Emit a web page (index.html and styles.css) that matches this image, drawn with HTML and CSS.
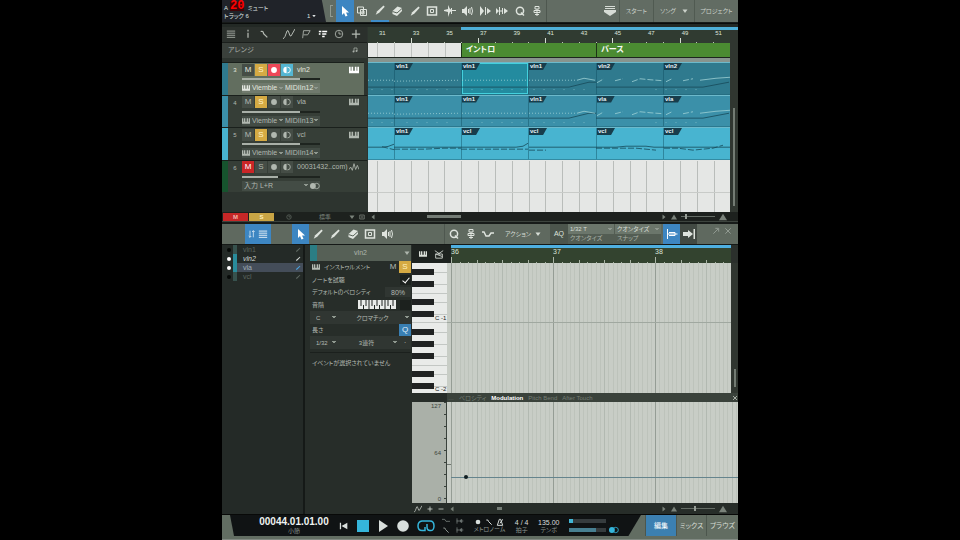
FILE: index.html
```html
<!DOCTYPE html>
<html lang="ja">
<head>
  <meta charset="UTF-8" />
  <title>アレンジ</title>
  <meta name="viewport" content="width=device-width, initial-scale=1.0" />
  <link rel="stylesheet" href="styles.css">
</head>
<body>
  <svg class="sprite" aria-hidden="true">
    <symbol id="arrow" viewBox="0 0 12 12"><path class="solid" d="M3 1v9l2-2 1.500 3.500 2-.8L7 7.500h3z"/></symbol>
    <symbol id="range" viewBox="0 0 12 12"><path d="M1.500 2h6v6h-6zM4.500 4.500h6v6h-6zM6 6h2v3H6z"/></symbol>
    <symbol id="pencil" viewBox="0 0 12 12"><path class="solid" d="M9.500 1.500l1.200 1.200-5.500 6-3.500 2 1.500-3.500z"/></symbol>
    <symbol id="eraser" viewBox="0 0 12 12"><path class="solid" d="M1.500 6l5-4.500 4.500 1.500v3l-5 5-4.500-2z"/><path class="cut" d="M1.500 6.500l4.500 1.500 5-4.500"/></symbol>
    <symbol id="box" viewBox="0 0 12 12"><path class="bold" d="M1.500 2h9v8h-9z"/><path d="M4.500 4.500h3v3h-3z"/></symbol>
    <symbol id="split" viewBox="0 0 12 12"><path class="solid" d="M4 0l2 4 2 1h4v1H8L6 7l-2 5V7L0 6V5l4-1z"/><path d="M7.500 3v6"/></symbol>
    <symbol id="bend" viewBox="0 0 12 12"><path class="solid" d="M0 3l3 3-3 3zM12 6L8 9V3z"/><path d="M3.500 2v8M5 5v2M6.500 3v6"/></symbol>
    <symbol id="stretch" viewBox="0 0 12 12"><path class="solid" d="M1 1l4 5-4 5zM12 6L8 9V3z"/><path d="M6.500 2v8"/></symbol>
    <symbol id="speaker" viewBox="0 0 12 12"><path class="solid" d="M1 4h2l3-3v10L3 8H1z"/><path d="M7.500 4v4M9 3v6M10.500 2q2 4 0 8"/></symbol>
    <symbol id="q" viewBox="0 0 12 12"><circle class="bold" cx="6" cy="5.800" r="3.600"/><path class="bold" d="M7 7.500l3 3"/></symbol>
    <symbol id="person" viewBox="0 0 12 12"><path d="M4 1.500h4v2.500H4zM6 4v7M3 5.500h6M3 5.500v2h6v-2M4 9.500h4"/></symbol>
    <symbol id="down" viewBox="0 0 12 12"><path class="solid" d="M1 1h10v1H1zM1 3h10v1H1zM0 5h12v2l-6 4-6-4z"/></symbol>
    <symbol id="menu" viewBox="0 0 12 12"><path d="M1 2.500h10M1 5h10M1 7.500h10M1 10h10"/></symbol>
    <symbol id="info" viewBox="0 0 12 12"><path class="bold" d="M6 1v2M6 4.500v6"/></symbol>
    <symbol id="wrench" viewBox="0 0 12 12"><path class="bold" d="M2 3q3-1 3.500 2.500L10 10"/></symbol>
    <symbol id="curve" viewBox="0 0 12 12"><path d="M0 11Q2 10 4 3q1-2 2 2t2 3l4-7"/></symbol>
    <symbol id="flag" viewBox="0 0 12 12"><path d="M2 11L3 2h8L8 7H3"/></symbol>
    <symbol id="blocks" viewBox="0 0 12 12"><path class="solid" d="M1 2h3v2H1zM5 2h6v2H5zM1 5h2v2H1zM5 5h5v2H5zM5 8h3v2H5z"/></symbol>
    <symbol id="clock" viewBox="0 0 12 12"><circle cx="6" cy="6" r="4.500"/><path d="M6 6v-3M6 6h3"/></symbol>
    <symbol id="plus" viewBox="0 0 12 12"><path class="bold" d="M6 1v10M1 6h10"/></symbol>
    <symbol id="minus" viewBox="0 0 12 12"><path class="bold" d="M1 6h10"/></symbol>
    <symbol id="note" viewBox="0 0 12 12"><path class="bold" d="M4 9V2h6v6"/><circle class="solid" cx="3" cy="9" r="2"/><circle class="solid" cx="9" cy="8" r="2"/></symbol>
    <symbol id="keys" viewBox="0 0 12 12"><path class="solid" d="M0 2h2v5h1V2h2v5h2V2h2v5h1V2h2v8H0z"/></symbol>
    <symbol id="wave" viewBox="0 0 12 12"><path d="M0 9l2-3 2 4 2-8 2 7 2-5 2 5"/></symbol>
    <symbol id="dot" viewBox="0 0 12 12"><circle class="solid" cx="6" cy="6" r="3.500"/></symbol>
    <symbol id="half" viewBox="0 0 12 12"><path class="solid" d="M5.500 2a4 4 0 0 0 0 8z"/><path d="M6.500 2.500a3.500 3.500 0 0 1 0 7"/></symbol>
    <symbol id="link" viewBox="0 0 12 12"><circle class="solid" cx="3.500" cy="6" r="3.500"/><circle cx="8" cy="6" r="3.200"/></symbol>
    <symbol id="updown" viewBox="0 0 12 12"><path d="M3 1v10M1 9l2 2 2-2M8 11V1M6 3l2-2 2 2"/></symbol>
    <symbol id="steps" viewBox="0 0 12 12"><path class="bold" d="M0 4h2l2 4h3l2-3h3"/></symbol>
    <symbol id="drum" viewBox="0 0 12 12"><path d="M2 6h8v5H2zM1 2l6 4M11 2L5 6M2 6l8 3"/></symbol>
    <symbol id="snap" viewBox="0 0 12 12"><path d="M1.500 1v10M1.500 6h10M3 4.500h6v3H3"/></symbol>
    <symbol id="next" viewBox="0 0 12 12"><path class="solid" d="M0 4h5V2l5 4-5 4V8H0zM10.500 1h1.500v10h-1.500z"/></symbol>
    <symbol id="pin" viewBox="0 0 12 12"><path class="bold" d="M2 10l7-7M5 2h5v5"/></symbol>
    <symbol id="close" viewBox="0 0 12 12"><path class="bold" d="M2 2l8 8M10 2l-8 8"/></symbol>
    <symbol id="start" viewBox="0 0 12 12"><path class="solid" d="M1 2h1.500v8H1zM10 2v8L3 6z"/></symbol>
    <symbol id="play" viewBox="0 0 12 12"><path class="solid" d="M2 0l9 6-9 6z"/></symbol>
    <symbol id="disc" viewBox="0 0 12 12"><circle class="solid" cx="6" cy="6" r="5.800"/></symbol>
    <symbol id="stop" viewBox="0 0 12 12"><path class="solid" d="M0 0h12v12H0z"/></symbol>
    <symbol id="loop" viewBox="0 0 18 12"><path class="bold" d="M7 10.500H5Q1 10.500 1 6t4-5h8q4 0 4 5t-4 4.500q-3 0-3-3.500V4M8 7v3.500H5"/></symbol>
    <symbol id="punch" viewBox="0 0 12 12"><path d="M1.500 2v8M1 6h10M8.500 3v6M7 4v4"/></symbol>
    <symbol id="pre" viewBox="0 0 12 12"><path d="M0 3.500h4l2 3h6"/></symbol>
    <symbol id="metro" viewBox="0 0 12 12"><path class="bold" d="M5 2h2l3 9H2zM6 8l4-6"/></symbol>
    <symbol id="left" viewBox="0 0 12 12"><path class="solid" d="M9 1v10L3 6z"/></symbol>
    <symbol id="right" viewBox="0 0 12 12"><path class="solid" d="M3 1v10l6-5z"/></symbol>
    <symbol id="hill" viewBox="0 0 12 12"><path class="solid" d="M6 1l6 10H0z"/></symbol>
    <symbol id="tri" viewBox="0 0 12 12"><path class="solid" d="M1 3h10l-5 7z"/></symbol>
  </svg>

  <main class="app">
    <header class="topbar">
      <div class="info">
        <div><span class="badge-a">A</span> ミュート</div>
        <div class="info-row"><span>トラック 6</span><span>1 <svg class="i4"><use href="#tri"/></svg></span></div>
        <span class="counter">20</span>
      </div>
      <div class="grip"></div>
      <nav class="tools" data-tools="arrow:on range pencil:line eraser pencil box split speaker stretch bend q person"></nav>
      <div class="pages">
        <svg class="i12"><use href="#down"/></svg>
        <button>スタート</button>
        <button>ソング <svg class="i6"><use href="#tri"/></svg></button>
        <button>プロジェクト</button>
      </div>
    </header>

    <section class="song">
      <div class="heads">
        <div class="head-tools">
          <svg class="i10"><use href="#menu"/></svg><svg class="i10"><use href="#info"/></svg><svg class="i10"><use href="#wrench"/></svg><i></i>
          <svg class="i12"><use href="#curve"/></svg><svg class="i10"><use href="#flag"/></svg><svg class="i10 lit"><use href="#blocks"/></svg><svg class="i10"><use href="#clock"/></svg><svg class="i10"><use href="#plus"/></svg>
        </div>
        <div class="arrange-head"><span>アレンジ</span><svg class="i6"><use href="#note"/></svg></div>
        <div class="rows" id="heads"></div>
      </div>
      <div class="timeline">
        <div class="ruler" id="ruler"></div>
        <div class="markers"><span class="blank"></span><span class="marker">イントロ</span><span class="marker">バース</span></div>
        <div class="rows lanes" id="lanes"></div>
        <div class="free"></div>
      </div>
      <div class="vscroll"><span></span></div>
    </section>
    <div class="song-foot">
      <div class="foot-left">
        <button class="mute-all">M</button><button class="solo-all">S</button>
        <svg class="i6"><use href="#clock"/></svg><span>標準</span><svg class="i6"><use href="#tri"/></svg><svg class="i6"><use href="#box"/></svg>
      </div>
      <div class="hscroll"><svg class="i6"><use href="#left"/></svg><span class="thumb song-thumb"></span><svg class="i6 push"><use href="#right"/></svg><svg class="i6"><use href="#hill"/></svg><span class="zoombar"></span><svg class="i8"><use href="#hill"/></svg></div>
    </div>

    <section class="editor">
      <header class="editbar">
        <div class="view-switch"><svg class="i8"><use href="#updown"/></svg><svg class="i10"><use href="#menu"/></svg></div>
        <nav class="tools" data-tools="arrow:on pencil pencil eraser box speaker"></nav>
        <nav class="tools second" data-tools="q person steps"></nav>
        <button class="action">アクション <svg class="i6"><use href="#tri"/></svg></button>
        <button class="aq">AQ</button>
        <div class="quant">
          <div><select id="quantize"><option>1/32 T</option></select><label for="quantize">クオンタイズ</label></div>
          <div><select id="snapping"><option>クオンタイズ</option></select><label for="snapping">スナップ</label></div>
        </div>
        <nav class="tools snapper" data-tools="snap:on next"></nav>
        <div class="window-btns"><svg class="i8"><use href="#pin"/></svg><svg class="i8"><use href="#close"/></svg></div>
      </header>

      <div class="edit-body">
        <ul class="tracklist">
          <li><b></b><i></i><span>vln1</span><svg class="i6"><use href="#pencil"/></svg></li>
          <li class="shown"><b></b><i></i><em>vln2</em><svg class="i6"><use href="#pencil"/></svg></li>
          <li class="shown current"><b></b><i></i><span>vla</span><svg class="i6"><use href="#pencil"/></svg></li>
          <li><b></b><i></i><span>vcl</span><svg class="i6"><use href="#pencil"/></svg></li>
        </ul>

        <aside class="inspector">
          <div class="part"><i></i><span>vln2</span><svg class="i6"><use href="#tri"/></svg></div>
          <div class="params">
            <div><svg class="i8"><use href="#keys"/></svg><span class="grow">インストゥルメント</span><button class="mini">M</button><button class="mini solo">S</button></div>
            <div><label class="grow" for="audition">ノートを試聴</label><input type="checkbox" id="audition" checked></div>
            <div><label class="grow" for="velocity">デフォルトのベロシティ</label><input class="field" id="velocity" value="80%"></div>
            <div><span class="grow">音階</span><svg class="scale-keys" viewBox="0 0 38 9"><path class="ivory" d="M0 0h38v9H0z"/><path class="ebony" d="M3 0v6M8 0v6M14 0v6M19 0v6M24 0v6M30 0v6M35 0v6M5.500 5v4M11 0v9M16.500 5v4M21.500 5v4M27 0v9M32.500 5v4"/></svg><input type="checkbox" aria-label="音階"></div>
            <div class="shade"><select class="root" aria-label="キー"><option>C</option></select><select class="grow mid" aria-label="スケール"><option>クロマチック</option></select></div>
            <div><span class="grow">長さ</span><button class="mini qbtn">Q</button></div>
            <div class="shade"><select class="root" aria-label="長さ"><option>1/32</option></select><select class="grow mid" aria-label="連符"><option>3連符</option></select><button class="mini">·</button></div>
          </div>
          <p class="empty">イベントが選択されていません</p>
        </aside>

        <div class="roll">
          <div class="roll-top">
            <div class="key-tools"><svg class="i8"><use href="#keys"/></svg><svg class="i10"><use href="#drum"/></svg></div>
            <div class="bars"><span>36</span><span>37</span><span>38</span><svg id="barTicks" viewBox="0 0 280 6" preserveAspectRatio="none"></svg></div>
            <div class="edge"></div>
          </div>
          <div class="notes">
            <svg class="keyboard" id="keyboard" viewBox="0 0 35 130" preserveAspectRatio="none"></svg>
            <svg class="grid" id="noteGrid" viewBox="0 0 284 130" preserveAspectRatio="none"></svg>
            <div class="vscroll edit-scroll"><span></span></div>
          </div>
          <div class="ctl-tabs"><button>…</button><button>ベロシティ</button><button class="picked">Modulation</button><button>Pitch Bend</button><button>After Touch</button><svg class="i6"><use href="#close"/></svg></div>
          <div class="control">
            <div class="scale"><span>127</span><span>64</span><span>0</span></div>
            <svg class="grid" id="ctlGrid" viewBox="0 0 291 101" preserveAspectRatio="none"></svg>
          </div>
          <div class="hscroll edit-hscroll"><svg class="i8"><use href="#curve"/></svg><svg class="i6"><use href="#plus"/></svg><svg class="i6"><use href="#minus"/></svg><svg class="i6"><use href="#left"/></svg><span class="thumb"></span><svg class="i6 push"><use href="#right"/></svg><svg class="i6"><use href="#hill"/></svg><span class="zoombar"></span><svg class="i8"><use href="#hill"/></svg></div>
        </div>
      </div>
    </section>

    <footer class="transport">
      <div class="deck">
        <div class="time"><strong>00044.01.01.00</strong><small>小節</small></div>
        <div class="buttons">
          <button aria-label="先頭へ"><svg class="i10"><use href="#start"/></svg></button>
          <button aria-label="停止" class="cyan"><svg class="i12"><use href="#stop"/></svg></button>
          <button aria-label="再生"><svg class="i12"><use href="#play"/></svg></button>
          <button aria-label="録音"><svg class="i12"><use href="#disc"/></svg></button>
          <button aria-label="ループ" class="cyan"><svg class="i18"><use href="#loop"/></svg></button>
        </div>
        <div class="punch"><svg class="i8"><use href="#pre"/></svg><svg class="i8"><use href="#punch"/></svg><svg class="i8"><use href="#wrench"/></svg><svg class="i8"><use href="#punch"/></svg></div>
        <div class="cell"><span><svg class="i8"><use href="#dot"/></svg><svg class="i8"><use href="#wrench"/></svg><svg class="i8"><use href="#metro"/></svg></span><small>メトロノーム</small></div>
        <div class="cell"><span>4 / 4</span><small>拍子</small></div>
        <div class="cell"><span>135.00</span><small>テンポ</small></div>
        <div class="meters"><i></i><i class="main-out"></i></div>
        <svg class="i10 cyan stereo"><use href="#link"/></svg>
      </div>
      <nav class="views"><button class="on">編集</button><button>ミックス</button><button>ブラウズ</button></nav>
    </footer>
  </main>

  <script src="app.js"></script>
</body>
</html>
```
FILE: app.js
```js
const icon = (name, size) => `<svg class="${size}"><use href="#${name}"/></svg>`;
const el = (id) => document.getElementById(id);

// tool buttons
document.querySelectorAll("[data-tools]").forEach((nav) => {
  nav.innerHTML = nav.dataset.tools.split(" ").map((t) => {
    const [name, state] = t.split(":");
    return `<button class="${state || ""}" aria-label="${name}">${icon(name, "i12")}</button>`;
  }).join("");
});

const tracks = [
  { n: 3, name: "vln2", out: "MIDIIn12", vol: 75, color: "#2f7a8e", sel: true, solo: true, rec: true, clips: ["", "vln1", "vln1", "vln1", "vln2", "vln2"] },
  { n: 4, name: "vla", out: "MIDIIn13", vol: 75, color: "#3b90a9", solo: true, clips: ["", "vln1", "vln1", "vln1", "vla", "vla"] },
  { n: 5, name: "vcl", out: "MIDIIn14", vol: 75, color: "#48b4d0", solo: true, clips: ["", "vln1", "vcl", "vcl", "vcl", "vcl"] },
  { n: 6, name: "00031432..com)", vol: 46, color: "#16532d", mute: true, audio: true, clips: [] }
];

function head(t) {
  const io = t.audio
    ? `<select class="input" aria-label="入力"><option>入力 L+R</option></select>${icon("link", "i10")}`
    : `${icon("keys", "i8")}<select class="synth" aria-label="音源"><option>Viemble</option></select><select class="port" aria-label="出力"><option>${t.out}</option></select>`;
  return `<div class="head ${t.sel ? "selected" : ""}">
    <i class="strip" style="background:${t.color}"></i><span class="num">${t.n}</span>
    <div class="strip-body">
      <div class="btns">
        <button class="${t.mute ? "mute" : ""}">M</button><button class="${t.solo ? "solo" : ""}">S</button>
        <button class="${t.rec ? "rec" : ""}" aria-label="録音">${icon("dot", "i10")}</button><button class="${t.rec ? "mon" : ""}" aria-label="モニター">${icon("half", "i10")}</button>
        <span class="name">${t.name}</span>${icon(t.audio ? "wave" : "keys", "i10")}
      </div>
      <input type="range" aria-label="音量" value="${t.vol}" style="--vol:${t.vol}%">
      <div class="io">${io}</div>
    </div>
  </div>`;
}

// note previews drawn over the clips, 362 x 32 units per lane
function preview(i) {
  if (i === 2) {
    return `<path class="dark" d="M0 19.500h14q6 0 12-3M26 19.500h67M93 19.500h55q8 0 12-4M161 19.500h67M228 19.500h20l10-1h20l8 1h76"/>
      <path class="dark dash" d="M14 19l12 3M26 21.500h30l20-1h17M93 21.500h67M161 22.500h17M228 20.500h40l20 2M296 20.500h14l15 2 20-2 10-3"/>`;
  }
  const y = i ? 22 : 24;
  return `<path class="dark" d="M0 ${y}.500h26M26 ${y}.500h67M93 ${y}.500h67M161 ${y}.500h40l20-5h7M228 ${y}.500h67M295 ${y}.500h40l26-5"/>
    <path class="lite dots" d="M0 17.500h26M26 18.500l66-1M94 17.500h65M161 17.500h48"/>
    <path class="lite" d="M209 17.500l7-2 11 2M332 17.500l16-2 14-1"/>
    <path class="lite dash" d="M229 20l7-4M247 18l8-2M264 19l8-3 10 1 13 1M298 19l6-3M315 18l10-2"/>
    <path class="lite faint" d="M3 27h22M38 27h50M103 27h55M165 27h60M287 27h50"/>`;
}

function lane(t, i) {
  if (t.audio) return `<div class="lane vacant"></div>`;
  return `<div class="lane" style="background:${t.color}">
    ${t.clips.map((c, k) => `<div class="clip ${t.sel && k === 2 ? "picked" : ""}">${c ? `<span>${c}</span>` : ""}</div>`).join("")}
    <svg class="preview" viewBox="0 0 362 32" preserveAspectRatio="none">${preview(i)}</svg>
  </div>`;
}

el("heads").innerHTML = tracks.map(head).join("");
el("lanes").innerHTML = tracks.map(lane).join("");

// song ruler
let marks = "";
for (let bar = 31; bar <= 51; bar++) {
  marks += `<span class="${bar % 4 === 1 ? "tall" : ""}">${bar % 2 ? bar : ""}</span>`;
}
el("ruler").innerHTML = marks;

// piano roll
const BAR = 102;
function lines(width, height, x0) {
  let out = "";
  for (let k = 0; x0 + k * BAR / 24 < width; k++) {
    const cls = k % 24 === 0 ? "bar" : k % 6 === 0 ? "beat" : "sub";
    const x = Math.round(x0 + k * BAR / 24);
    out += `<path class="${cls}" d="M${x}.500 0V${height}"/>`;
  }
  return out;
}
el("noteGrid").innerHTML = lines(284, 130, 4) + `<path class="octave" d="M0 59.500H284"/>`;
el("ctlGrid").innerHTML = lines(291, 101, 4) +
  `<path class="value" d="M4 75.500H291"/><path class="tickmark" d="M0 62.500H4"/><circle cx="19" cy="75" r="2"/>`;

let ticks = "";
for (let k = 0; k * BAR / 12 < 280; k++) {
  const h = k % 12 === 0 ? 6 : k % 3 === 0 ? 3 : 1;
  ticks += `<path d="M${Math.round(k * BAR / 12)}.500 ${6 - h}V6"/>`;
}
el("barTicks").innerHTML = ticks;

const black = [9, 21, 39, 51, 69, 81, 93, 111, 123];
el("keyboard").innerHTML = `<path class="ivory" d="M0 0h35v130H0z"/>` +
  [...black, 30, 59, 102].map((y) => `<path class="seam" d="M0 ${y}.500H35"/>`).join("") +
  black.map((y) => `<path class="ebony" d="M0 ${y - 3}h22v6H0z"/>`).join("") +
  `<text x="23" y="57">C -1</text><text x="23" y="128">C -2</text>`;
```
FILE: styles.css
```css
* {
  box-sizing: border-box;
}

body {
  margin: 0;
  padding: 0 222px;
  background: #000;
  color: #b4bab3;
  font: 7px/8px "Liberation Sans", "Noto Sans CJK JP", sans-serif;
  font-feature-settings: "palt";
}

button, select, input {
  font: inherit;
  color: inherit;
  background: none;
  border: 0;
  border-radius: 0;
  padding: 0;
  margin: 0;
  appearance: none;
  outline: 0;
}

button {
  display: flex;
  align-items: center;
  justify-content: center;
  white-space: nowrap;
}

select {
  min-width: 0;
  height: 10px;
  padding: 0 6px 0 2px;
  background: linear-gradient(to bottom right, #8f988f 50%, transparent 50%) right 2px center / 2px 3px no-repeat,
    linear-gradient(to bottom left, #8f988f 50%, transparent 50%) right 4px center / 2px 3px no-repeat;
}

/* icons */
svg { flex: none; fill: none; stroke: currentColor; stroke-width: 1; }
.sprite { position: absolute; width: 0; height: 0; }
.solid { fill: currentColor; stroke: none; }
.bold { stroke-width: 1.5; }
.cut { stroke: #59645a; }
.i4 { width: 4px; height: 4px; }
.i6 { width: 6px; height: 6px; }
.i8 { width: 8px; height: 8px; }
.i10 { width: 10px; height: 10px; }
.i12 { width: 12px; height: 12px; }
.i18 { width: 18px; height: 12px; }
.cyan { color: #35b5db; }
.grow { flex: 1; }

.app {
  display: flex;
  flex-direction: column;
  min-height: 100vh;
  background: #171b19;
}

/* top bar */
.topbar {
  display: flex;
  height: 22px;
  background: #626c63;
}

.info {
  position: relative;
  width: 104px;
  padding: 4px 10px 0 2px;
  background: #202329;
  color: #dde2e2;
  font-size: 6px;
  clip-path: polygon(0 0, 96% 0, 100% 100%, 0 100%);
}
.info-row { display: flex; justify-content: space-between; }
.badge-a { display: inline-block; width: 22px; }
.counter {
  position: absolute;
  left: 8px;
  top: 0;
  font: bold 12px/13px "Liberation Mono", monospace;
  color: #f00;
  background: linear-gradient(#400508 0 0) 0 2px / 100% 9px no-repeat;
}

.grip { width: 3px; margin: 5px 3px 5px 4px; border: 1px solid #929b92; border-right: 0; }
.tools { display: flex; flex: 0 0 210px; color: #dfe4de; }
.tools button { flex: 1; }
.tools .on { background: #3d86c2; color: #fff; }
.tools .line { border-bottom: 2px solid #3e8cc8; }
.pages { display: flex; flex: 1; align-items: center; border-left: 1px solid #4e574f; font-size: 6px; color: #ccd2cb; }
.pages > svg { margin-left: auto; margin-right: 3px; color: #d7dcd6; }
.pages button { height: 22px; gap: 6px; border-left: 1px solid #505a51; }
.pages button:nth-of-type(1) { width: 34px; }
.pages button:nth-of-type(2) { width: 41px; }
.pages button:nth-of-type(3) { width: 44px; }

/* song view */
.song {
  display: flex;
  margin-top: 1px;
  padding-top: 3px;
  background: #232925;
  border-top: 1px solid #0a0c0b;
}
.heads { width: 146px; background: #2d342f; padding-right: 1px; }
.head-tools { display: flex; align-items: center; justify-content: space-between; height: 15px; padding: 0 6px 1px 4px; background: #2b302c; }
.head-tools .lit { color: #fff; }
.arrange-head { display: flex; align-items: center; justify-content: space-between; height: 16px; margin-bottom: 4px; padding: 0 9px 2px 6px; background: #3a403b; border-top: 1px solid #1b1f1c; color: #a7ada6; }
.rows { display: grid; grid-auto-rows: 1fr; height: 130px; }

.head { display: flex; border-top: 1px solid #1a201c; background: #363e37; color: #b1b8b0; min-height: 0; }
.head.selected { background: #626e5f; margin-right: 3px; color: #e2e6df; }
.strip { width: 6px; }
.num { width: 14px; padding-top: 3px; text-align: center; font-size: 6px; }
.strip-body { flex: 1; min-width: 0; }
.btns { display: flex; align-items: center; gap: 1px; height: 13px; }
.btns button { width: 12px; height: 12px; background: #454d46; font-size: 8px; }
.btns .solo { background: #d5aa43; color: #fff3cd; }
.btns .mute { background: #ca2627; color: #fff; }
.btns .rec { background: #ee4858; color: #fff; }
.btns .mon { background: #54b6d2; color: #fff; }
.btns .name { flex: 1; padding-left: 3px; white-space: nowrap; }
.btns > svg { margin-right: 8px; }
.selected .btns > svg { margin-right: 5px; color: #fff; }
input[type="range"] {
  display: block;
  width: 78px;
  height: 2px;
  margin: 2px 0 3px;
  background: linear-gradient(90deg, #a9b0a8 var(--vol), #1e241f var(--vol));
}
input[type="range"]::-webkit-slider-thumb { appearance: none; width: 1px; height: 2px; }
.io { display: flex; align-items: center; width: 78px; height: 10px; background-color: #434c45; }
.selected .io { background-color: #707a6d; }
.synth { width: 35px; }
.port { flex: 1; padding-left: 0; }
.input { flex: 1; }

.timeline { flex: 1; display: flex; flex-direction: column; background: #88948e; }
.ruler {
  display: flex;
  height: 16px;
  padding: 2px 0 0 9px;
  background: linear-gradient(#4eafd8 0 0) 93px 0 / 100% 3px no-repeat, #303b31;
  color: #dde3db;
  overflow: hidden;
}
.ruler span { flex: 1; border-left: 1px solid; border-image: linear-gradient(transparent 85%, #bac4b8 85%) 1; height: 14px; width: 0; padding-left: 1px; font-size: 6px; line-height: 8px; }
.ruler span.tall { border-image: linear-gradient(transparent 65%, #d6ddd3 65%) 1; }
.markers { display: grid; grid-template-columns: 93fr 135fr 134fr; height: 15px; margin-bottom: 4px; border-bottom: 1px solid #1d251f; }
.blank { background: repeating-linear-gradient(90deg, #e5e7e5 0 9px, #bfc3c0 9px 10px, #e5e7e5 10px 17px); }
.free, .vacant { background: repeating-linear-gradient(90deg, #e5e7e5 0 2.5%, #b9bdba 2.5% 2.8%, #e5e7e5 2.8% 4.65%); }
.marker { background: #4b8b32; border-left: 1px solid #1d3317; padding: 3px 4px; color: #f6faf2; font-size: 8px; font-weight: bold; }
.lane { position: relative; display: grid; grid-template-columns: 26fr 67fr 67fr 68fr 67fr 67fr; border-top: 1px solid #6cb9cb; min-height: 0; }
.lane.vacant { border-top-color: #e5e7e5; }
.clip { border-left: 1px solid #0e4c5e70; border-bottom: 1px solid #1f637780; }
.clip:first-child { border-left: 0; }
.clip span { display: block; width: 18px; height: 7px; padding-left: 1px; background: #173d4c; color: #e8f4f6; font-size: 6px; line-height: 7px; font-weight: bold; clip-path: polygon(0 0, 100% 0, 78% 100%, 0 100%); }
.clip.picked { background: #238b9f; box-shadow: inset 0 0 0 1px #43d0dd; }
.preview { position: absolute; left: 0; top: 0; width: 100%; height: 100%; }
.dark { stroke: #174958; opacity: .8; }
.lite { stroke: #9ed0d4; opacity: .8; }
.dots { stroke-dasharray: 1 2; }
.dash { stroke-dasharray: 6 2; }
.lite.faint { stroke-dasharray: 2 8; opacity: .3; }
.free { height: 20px; border-top: 1px solid #c8cbc8; }
.vscroll { display: flex; align-items: flex-end; justify-content: center; width: 8px; background: #303630; border-top: 3px solid #4eafd8; }
.vscroll span { width: 2px; height: 98px; margin-bottom: 6px; background: #737b73; }

.song-foot { display: flex; height: 10px; background: #1d211e; border-bottom: 1px solid #3d443e; color: #7b837b; font-size: 6px; }
.foot-left { display: flex; align-items: center; width: 146px; padding: 0 3px 0 1px; }
.foot-left button { width: 25px; height: 8px; margin-right: 1px; font-weight: bold; }
.mute-all { background: #c62727; color: #f3b5ac; }
.solo-all { background: #c9a545; color: #fff0bd; }
.foot-left span { margin: 0 18px 0 27px; }
.foot-left > svg:first-of-type { margin-left: 11px; }
.foot-left > svg:last-child { margin-left: auto; }
.hscroll { display: flex; flex: 1; align-items: center; gap: 4px; padding: 0 11px 0 2px; color: #7b837b; }
.push { margin-left: auto; }
.thumb { width: 5px; height: 3px; background: #747c75; }
.song-thumb { width: 34px; margin-left: 47px; }
.zoombar { width: 34px; height: 5px; background: linear-gradient(#969d96 0 0) 4px 0 / 2px 5px no-repeat, linear-gradient(#646c65 0 0) 0 2px / 100% 1px no-repeat; }
.edit-hscroll .zoombar { background-position: 13px 0, 0 2px; }

/* note editor */
.editor { display: flex; flex: 1; flex-direction: column; margin-top: 2px; }
.editbar { display: flex; height: 20px; background: #5f695f; font-size: 6px; }
.view-switch { display: flex; align-items: center; justify-content: space-evenly; width: 26px; margin: 0 21px 0 23px; background: #3d86c2; color: #fff; }
.editbar .tools { flex: 0 0 104px; }
.editbar .second { flex: 0 0 52px; margin-left: auto; border-left: 1px solid #4e574f; }
.action { width: 54px; gap: 4px; color: #d7ddd5; }
.aq { width: 18px; background: #4c554c; color: #dde2dc; font-size: 7px; }
.quant { display: grid; grid-template-columns: 46px 46px; column-gap: 1px; color: #d9dfd7; background: #535d53; }
.quant div { display: flex; flex-direction: column; }
.quant select { background-color: #6b766b; }
.quant label { padding-left: 2px; color: #abb4aa; line-height: 9px; }
.editbar .snapper { flex: 0 0 34px; margin-left: 2px; }
.snapper button:last-child { background: #424a43; }
.window-btns { display: flex; gap: 4px; align-items: center; padding: 0 6px 6px 15px; color: #929b92; }

.edit-body { display: flex; flex: 1; border-top: 1px solid #151917; background: #272d29; }
.tracklist { list-style: none; width: 81px; margin: 0; padding: 0; background: #242a27; }
.tracklist li { display: flex; align-items: center; height: 9px; padding: 0 2px 0 5px; color: #5c665f; }
.tracklist b { width: 4px; height: 4px; border-radius: 50%; background: #070a08; }
.tracklist i { width: 4px; height: 9px; margin: 0 6px 0 2px; background: #37524e; }
.tracklist svg { margin-left: auto; }
.tracklist .shown { color: #d2d8d4; }
.tracklist .shown b { background: #fff; }
.tracklist .shown i { background: #298b9b; }
.tracklist .current { background: linear-gradient(90deg, transparent 14px, #444d59 14px); color: #a3b0b8; }
.current svg { color: #4ba4df; }

.inspector { width: 109px; padding: 0 1px 0 5px; border-left: 2px solid #151917; font-size: 6px; }
.part { display: flex; align-items: center; height: 16px; padding-right: 1px; background: #566056; color: #aeb6ad; font-size: 7px; }
.part i { width: 7px; height: 100%; background: #2b7d84; }
.part span { flex: 1; text-align: center; }
.params { display: grid; grid-auto-rows: 1fr; height: 88px; }
.params > div { display: flex; align-items: center; padding-left: 2px; white-space: nowrap; }
.params > .shade { background: #303632; }
.params svg:first-child { margin-right: 4px; }
.mini { width: 12px; height: 12px; font-size: 8px; }
.mini.solo { background: #d5aa43; color: #fff0be; }
.qbtn { background: #397fb3; color: #e4f1fa; }
.field { width: 26px; height: 10px; background: #303632; text-align: center; font-size: 7px; }
input[type="checkbox"] { display: grid; place-items: center; width: 11px; height: 10px; background: #1c211e; }
input[type="checkbox"]:checked::before { content: ""; width: 3px; height: 6px; border: solid #fff; border-width: 0 1px 1px 0; transform: rotate(40deg); }
.scale-keys { width: 38px; height: 9px; margin-right: 4px; }
.ivory { fill: #e9ebe9; stroke: none; }
.scale-keys .ebony { stroke: #202522; }
.root { width: 26px; padding-left: 4px; }
.mid { text-align: center; text-align-last: center; }
.empty { margin: 3px 0 0; padding: 6px 2px; border-top: 1px solid #1b201d; white-space: nowrap; }

.roll { display: flex; flex: 1; flex-direction: column; min-width: 0; }
.roll-top { display: flex; height: 18px; }
.key-tools { display: flex; width: 39px; align-items: center; justify-content: space-evenly; background: #1d221f; color: #dadfd9; }
.bars { position: relative; display: grid; grid-template-columns: 102fr 102fr 76fr; flex: 1; padding-top: 1px; background: #33432f; border-top: 3px solid #4eafe0; line-height: 6px; color: #dce3d9; }
.bars svg { position: absolute; left: 0; bottom: 0; width: 100%; height: 6px; stroke: #a9b4a5; }
.edge { width: 7px; background: #2b302c; }
.notes { display: flex; height: 130px; }
.keyboard { width: 35px; height: 100%; }
.keyboard .ebony { fill: #202222; stroke: none; }
.seam { stroke: #c3c7c4; }
.keyboard text { fill: #222; stroke: none; font-size: 6px; }
.grid { flex: 1; min-width: 0; height: 100%; background: #c8cdc6; }
.sub { stroke: #bdc3bb; }
.beat { stroke: #b2b9b1; }
.bar { stroke: #959d95; }
.octave { stroke: #a0a8a0; }
.value { stroke: #65848d; }
.tickmark { stroke: #717871; }
.grid circle { fill: #101e22; stroke: none; }
.edit-scroll { width: 7px; border-top: 0; }
.edit-scroll span { height: 18px; }
.ctl-tabs { display: flex; align-items: center; gap: 5px; height: 9px; padding-left: 36px; background: linear-gradient(90deg, #272d29 35px, #3a423b 35px); color: #747d74; font-size: 6px; }
.ctl-tabs .picked { color: #fff; font-weight: bold; }
.ctl-tabs svg { margin-left: auto; color: #c9cfc7; }
.control { display: flex; flex: 1; }
.control .grid { height: auto; }
.scale {
  display: flex;
  flex-direction: column;
  justify-content: space-between;
  width: 35px;
  padding-right: 5px;
  border-right: 1px solid #3a423c;
  background: repeating-linear-gradient(#3a423c 0 1px, transparent 1px 12px) right / 2px 100% no-repeat, #aab0a8;
  color: #3a423c;
  text-align: right;
  font-size: 6px;
}
.edit-hscroll { flex: 0 0 11px; }
.edit-hscroll svg:nth-child(-n+3) { color: #dce1db; margin-right: 1px; }
.edit-hscroll .thumb { margin-left: 38px; }

/* transport */
.transport { display: flex; height: 26px; padding-bottom: 3px; border-top: 1px solid #080908; border-bottom: 1px solid #828a83; background: #626d62; }
.deck { display: flex; flex: 1; align-items: center; padding: 0 22px 0 36px; margin-right: 4px; background: #101314; color: #d8dedc; clip-path: polygon(8px 0, 100% 0, 97% 100%, 12px 100%); }
.deck small { font-size: 6px; line-height: 7px; color: #8d9591; }
.time { display: flex; flex-direction: column; align-items: center; width: 72px; }
.time strong { font-size: 10px; line-height: 12px; color: #eef2f0; }
.buttons { display: flex; align-items: center; justify-content: space-between; width: 96px; margin-left: 9px; }
.punch { display: grid; grid-template-columns: 8px 8px; gap: 1px 6px; margin: 0 auto 0 7px; color: #8d9591; }
.cell { display: flex; flex-direction: column; align-items: center; margin: 0 auto 0 0; white-space: nowrap; }
.cell span { display: flex; gap: 3px; line-height: 9px; }
.meters { display: grid; gap: 5px; width: 37px; }
.meters i { height: 4px; background: linear-gradient(90deg, #41b6d6 4px, #363c3e 4px); }
.meters .main-out { background: linear-gradient(90deg, #477f91 72%, #363c3e 72%); }
.stereo { margin: 9px 0 0 3px; }
.views { display: grid; grid-template-columns: 31px 30px 32px; }
.views button { border-left: 1px solid #4c564d; color: #d8ded6; }
.views .on { background: #3c80b1; color: #fff; }
```
